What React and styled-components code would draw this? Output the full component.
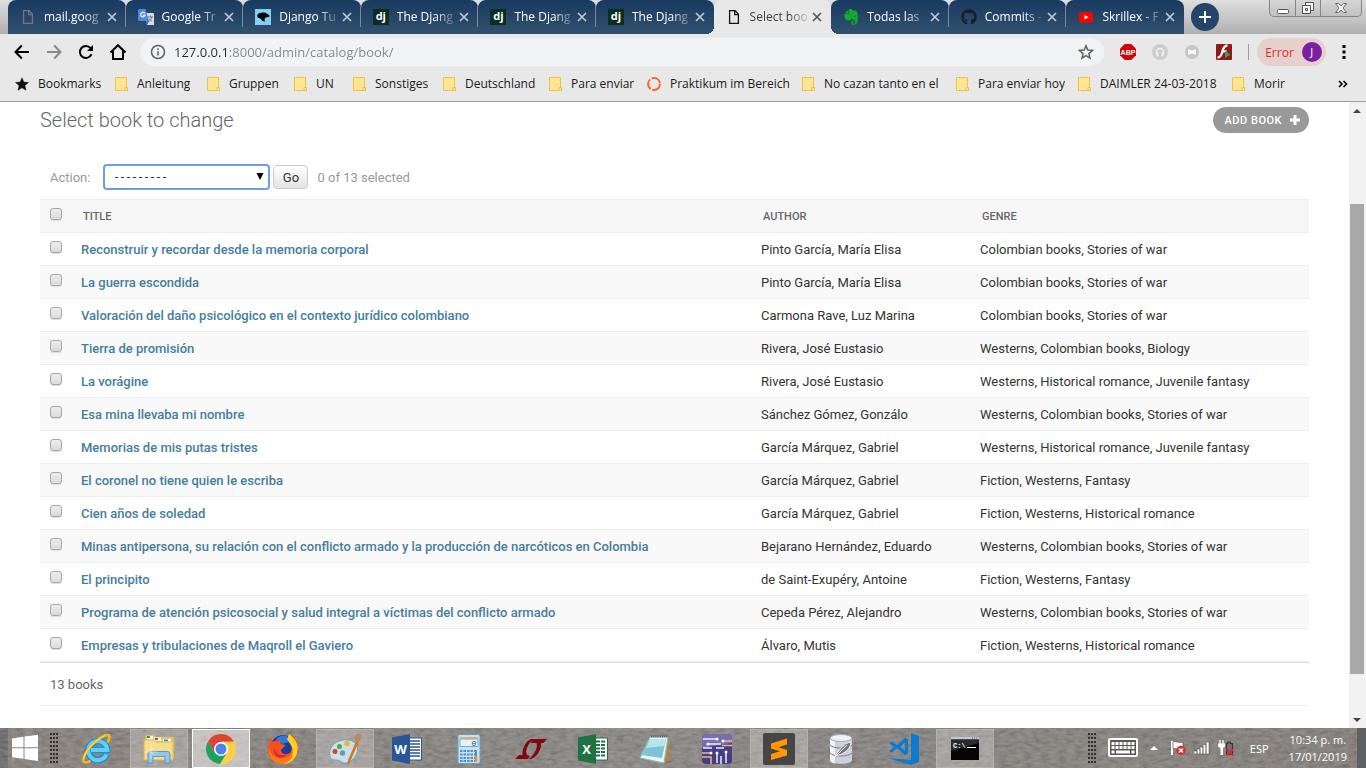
import React from 'react';
import styled, { createGlobalStyle, css } from 'styled-components';
import { SiEvernote } from 'react-icons/si';
import { FaGithub } from 'react-icons/fa';

const ui = '"Open Sans", "Noto Sans", sans-serif';
const roboto = 'Roboto, "Liberation Sans", sans-serif';

const GlobalStyle = createGlobalStyle`
  * { box-sizing: border-box; }
  body { margin: 0; background: #fff; font-family: ${ui}; }
  button, input, select { font: inherit; margin: 0; }
  a { text-decoration: none; }
`;

const Screen = styled.div`
  display: flex;
  flex-direction: column;
  min-height: 100vh;
`;

const PlainButton = styled.button`
  display: flex;
  align-items: center;
  justify-content: center;
  padding: 0;
  border: 0;
  background: none;
  color: inherit;
`;

/* ---------- tab strip ---------- */

const TabStrip = styled.div`
  display: flex;
  align-items: flex-start;
  height: 34px;
  padding: 0 4px 0 8px;
  background: linear-gradient(#dedede, #b0b0b0);
`;

const Tabs = styled.div`
  display: grid;
  grid-template-columns: repeat(10, minmax(0, 1fr));
  flex: 0 1 1176px;
  height: 34px;
`;

const activeTab = css`
  background: #e8e8e8;
  color: #3c3c3c;
  z-index: 1;
  &::before, &::after {
    content: '';
    position: absolute;
    bottom: 0;
    width: 8px;
    height: 8px;
  }
  &::before { left: -8px; background: radial-gradient(circle at 0 0, transparent 8px, #e8e8e8 8px); }
  &::after { right: -8px; background: radial-gradient(circle at 100% 0, transparent 8px, #e8e8e8 8px); }
`;

const Tab = styled.div`
  position: relative;
  display: flex;
  align-items: center;
  gap: 8px;
  padding: 0 8px 0 12px;
  border-radius: 8px 8px 0 0;
  background: linear-gradient(#183a60, #32516f);
  color: #fff;
  ${p => p.$divider && css`
    &::after {
      content: '';
      position: absolute;
      right: 0;
      top: 7px;
      width: 1px;
      height: 20px;
      background: #7189a1;
    }
  `}
  ${p => p.$active && activeTab}
`;

const TabTitle = styled(PlainButton)`
  flex: 1;
  min-width: 0;
  margin-right: -6px;
  justify-content: flex-start;
  overflow: hidden;
  white-space: nowrap;
  font-size: 12px;
  line-height: 18px;
  mask-image: linear-gradient(90deg, #000 65%, rgba(0, 0, 0, 0.1));
`;

const TabClose = styled(PlainButton)`
  width: 12px;
  height: 18px;
  color: ${p => (p.$active ? '#555' : '#c3ccd6')};
`;

const DjBadge = styled.span`
  display: block;
  flex: none;
  width: 16px;
  height: 16px;
  background: #0c2e20;
  color: #fff;
  font: 700 11px/14px ${ui};
  text-align: center;
`;

const NewTab = styled(PlainButton)`
  width: 28px;
  height: 28px;
  margin: 3px 0 0 7px;
  border-radius: 14px;
  background: #234569;
`;

const WindowControls = styled.div`
  display: flex;
  height: 17px;
  margin-left: auto;
  border: 1px solid #858585;
  border-top: 0;
  border-radius: 0 0 5px 5px;
  background: linear-gradient(#d6d6d6, #c0c0c0);
`;

const WindowButton = styled(PlainButton)`
  width: ${p => (p.$wide ? 41 : 25)}px;
  & + & { border-left: 1px solid #858585; }
`;

/* ---------- toolbar ---------- */

const Toolbar = styled.div`
  display: flex;
  align-items: center;
  height: 36px;
  padding: 0 12px;
  background: #e8e8e8;
`;

const IconRow = styled.div`
  display: flex;
  gap: 12px;
`;

const ToolButton = styled(PlainButton)`
  width: 20px;
  height: 28px;
`;

const Omnibox = styled.div`
  display: flex;
  align-items: center;
  flex: 1;
  height: 28px;
  margin: 0 14px 0 12px;
  padding: 0 10px;
  border-radius: 14px;
  background: #f1f3f4;
`;

const Address = styled.input`
  flex: 1;
  min-width: 0;
  margin-left: 8px;
  padding: 0;
  border: 0;
  outline: 0;
  background: linear-gradient(90deg, #2b2b2b 53px, #80868b 53px) text;
  color: #5f6368;
  -webkit-text-fill-color: transparent;
  font-size: 13px;
  line-height: 20px;
`;

const Divider = styled.span`
  width: 1px;
  height: 16px;
  margin: 0 8px 0 14px;
  background: #9c9c9c;
`;

const Profile = styled(PlainButton)`
  width: 69px;
  height: 28px;
  margin-right: 8px;
  gap: 8px;
  padding-left: 4px;
  border-radius: 14px;
  background: #e6cfcd;
  color: #d93025;
  font-size: 12px;
`;

const Avatar = styled.span`
  width: 20px;
  height: 20px;
  border-radius: 10px;
  background: #7b1fa2;
  color: #fff;
  font-size: 11px;
  line-height: 20px;
`;

/* ---------- bookmarks ---------- */

const BookmarksBar = styled.nav`
  display: flex;
  align-items: center;
  height: 32px;
  padding: 0 16px 3px 15px;
  border-bottom: 1px solid #a0a0a0;
  background: #e8e8e8;
`;

const Bookmark = styled.a`
  display: flex;
  align-items: center;
  flex: 0 1 ${p => p.$w}px;
  min-width: 0;
  color: #1a1a1a;
  font-size: 12px;
  line-height: 20px;
  svg { flex: none; width: 14px; margin-right: ${p => (p.$wide ? 9 : 8)}px; }
`;

const BookmarkText = styled.span`
  max-width: ${p => (p.$fade ? 112 : 124)}px;
  overflow: hidden;
  white-space: nowrap;
  ${p => p.$fade && css`mask-image: linear-gradient(90deg, #000 85%, rgba(0, 0, 0, 0.1));`}
`;

const More = styled(PlainButton)`
  margin-left: auto;
  width: 14px;
`;

/* ---------- page ---------- */

const Viewport = styled.div`
  display: flex;
  flex: 1;
`;

const Main = styled.main`
  flex: 1;
  min-width: 0;
  padding: 5px 40px 22px;
  color: #333;
  font-family: ${roboto};
  font-size: 13px;
`;

const PageHead = styled.header`
  display: flex;
  align-items: center;
  justify-content: space-between;
`;

const Heading = styled.h1`
  margin: 0;
  color: #666;
  font-size: 20px;
  font-weight: 300;
  line-height: 26px;
`;

const AddLink = styled.a`
  display: flex;
  align-items: center;
  gap: 7px;
  height: 26px;
  padding: 0 8px 0 12px;
  border-radius: 13px;
  background: #999;
  color: #fff;
  font-size: 11px;
  font-weight: 500;
  letter-spacing: 0.5px;
  text-transform: uppercase;
`;

const Actions = styled.form`
  display: flex;
  align-items: center;
  padding: 31px 10px 9px;
  color: #999;
`;

const ActionLabel = styled.label`
  display: flex;
  align-items: center;
`;

const SelectWrap = styled.span`
  position: relative;
  display: flex;
  margin: 0 3px 0 13px;
  svg { position: absolute; right: 6px; top: 9px; pointer-events: none; }
`;

const Select = styled.select`
  appearance: none;
  width: 167px;
  height: 26px;
  padding: 2px 8px 0;
  border: 2px solid #6f9be8;
  border-radius: 4px;
  background: #fff;
  color: #000;
  font: 10px/20px "Liberation Mono", monospace;
`;

const GoButton = styled.button`
  width: 35px;
  height: 24px;
  padding: 0;
  border: 1px solid #ccc;
  border-radius: 4px;
  background: linear-gradient(#fff, #e4e4e4);
  color: #333;
`;

const Counter = styled.span`
  margin-left: 9px;
`;

const Table = styled.table`
  width: 100%;
  table-layout: fixed;
  border-collapse: separate;
  border-spacing: 0;
  border-bottom: 1px solid #ddd;
`;

const Col = styled.col`
  width: ${p => (p.$w ? `${p.$w}px` : 'auto')};
`;

const HeadCell = styled.th`
  height: 34px;
  padding: 0 10px;
  border: 1px solid #eee;
  border-width: 1px 0;
  background: #f6f6f6;
  color: #666;
  font-size: 11px;
  font-weight: 500;
  text-align: left;
  text-transform: uppercase;
`;

const Row = styled.tr`
  background: #fff;
  &:nth-child(even) { background: #f9f9f9; }
`;

const Cell = styled.td`
  height: 33px;
  padding: 0 8px;
  border-bottom: 1px solid #eee;
  white-space: nowrap;
`;

const HeadCheckCell = styled(HeadCell)`
  padding: 0 10px 4px;
`;

const CheckCell = styled(Cell)`
  padding: 0 10px 4px;
`;

const Check = styled.input`
  appearance: none;
  display: block;
  width: 12px;
  height: 12px;
  border: 1px solid #a6a6a6;
  border-radius: 3px;
  background: linear-gradient(#ededed, #dcdcdc);
  box-shadow: 0 1px 1px #ddd;
`;

const BookLink = styled.a`
  color: #447e9b;
  font-weight: 500;
`;

const Paginator = styled.p`
  margin: 0;
  padding: 12px 10px 10px;
  border-bottom: 1px solid #eee;
  color: #666;
  line-height: 20px;
`;

const Scrollbar = styled.div`
  display: flex;
  flex-direction: column;
  width: 17px;
  padding: 0 2px 0 1px;
  background: #f1f1f1;
`;

const ScrollButton = styled(PlainButton)`
  height: 17px;
`;

const ScrollPart = styled.div`
  flex: ${p => p.$grow};
  background: ${p => (p.$thumb ? '#a8a8a8' : 'transparent')};
`;

/* ---------- taskbar ---------- */

const Taskbar = styled.footer`
  position: relative;
  display: flex;
  align-items: stretch;
  height: 40px;
  padding-left: 8px;
  background: linear-gradient(90deg, #5c5c5e 8px, #7b746e 8px, #7e7a76 50%, #77706a);
  color: #fff;
  font-size: 12px;
  & > * { position: relative; }
`;

const Texture = styled.svg`
  && { position: absolute; }
  inset: 0;
  width: 100%;
  height: 100%;
  opacity: 0.25;
`;

const Start = styled(PlainButton)`
  width: 34px;
`;

const Grip = styled.span`
  display: grid;
  place-items: center;
  width: 8px;
  margin: 0 10px 0 8px;
`;

const Apps = styled.div`
  display: flex;
  gap: 4px;
`;

const states = {
  idle: css`border-color: transparent;`,
  open: css`border-color: #b4b1ae; background: rgba(255, 255, 255, 0.24);`,
  active: css`border-color: #fff; background: rgba(255, 255, 255, 0.5);`,
};

const AppButton = styled(PlainButton)`
  width: 58px;
  height: 39px;
  margin-top: 1px;
  border: 1px solid;
  ${p => states[p.$state]}
`;

const Tray = styled.div`
  display: flex;
  align-items: center;
  margin-left: auto;
`;

const TrayIcons = styled.div`
  display: flex;
  align-items: center;
  gap: 8px;
  margin: 0 16px 0 2px;
`;

const TrayButton = styled(PlainButton)`
  width: ${p => p.$w || 16}px;
  height: 30px;
`;

const Clock = styled.time`
  margin: 0 10px 0 20px;
  font-size: 11px;
  line-height: 17px;
  text-align: center;
`;

const Language = styled.span`
  font-size: 11px;
`;

const ShowDesktop = styled.button`
  align-self: stretch;
  width: 9px;
  padding: 0;
  border: 0;
  background: #5f6062;
`;

/* ---------- drawings ---------- */

const PageIcon = ({ color }) => (
  <svg width="16" height="16" viewBox="0 0 16 16" fill="none" stroke={color} strokeWidth="1.3">
    <path d="M3.6 1.6h5.6l3.2 3.6v9.2H3.6zM8.7 1.8v3.8h3.6" />
  </svg>
);

const TranslateIcon = () => (
  <svg width="16" height="16" viewBox="0 0 16 16">
    <path d="M7 4h8.2l.8.8v11.2H9z" fill="#dadce0" />
    <path d="M10 8h5M12.5 6.5V8m1.5 0c-.6 2.4-2 3.6-3.5 4.3M11 9.500c.6 1.200 1.800 2.200 3 2.700" stroke="#6b7b87" fill="none" />
    <path d="M1 0h6.500l3.500 12H1.200L0 11V1z" fill="#4a86e8" />
    <path d="M8.500 12H11l-2 4z" fill="#2a56c6" />
    <path d="M6.800 4.300a2.300 2.300 0 1 0 .3 2.100H5" stroke="#fff" strokeWidth="1.200" fill="none" />
  </svg>
);

const TutorialIcon = () => (
  <svg width="16" height="16" viewBox="0 0 16 16">
    <path d="M0 0h16v16H0z" fill="#83d0f2" />
    <path d="M2 6.500q1-2.500 4-2.700 4-.8 6 1l2.500 1.700-.5 1.500-3.500.5-1 1.500.5 2.500-2.500-.5-2-2.500L3 8.800z" />
  </svg>
);

const YoutubeIcon = () => (
  <svg width="16" height="16" viewBox="0 0 16 16">
    <rect x="1" y="3" width="14" height="10.500" rx="2.500" fill="red" />
    <path d="M6.500 6v4.500l4-2.250z" fill="#fff" />
  </svg>
);

const CloseIcon = () => (
  <svg width="10" height="10" viewBox="0 0 10 10" stroke="currentColor" strokeWidth="1.600">
    <path d="M1 1l8 8M9 1L1 9" />
  </svg>
);

const BackIcon = ({ flip, color = '#000' }) => (
  <svg width="16" height="16" viewBox="0 0 16 16" fill="none" stroke={color} strokeWidth="2">
    <path d={flip ? 'M1 8h13M8.200 1.500L14.500 8l-6.300 6.500' : 'M15 8H2M7.800 1.500L1.500 8l6.300 6.500'} />
  </svg>
);

const ReloadIcon = () => (
  <svg width="16" height="16" viewBox="0 0 16 16">
    <path d="M13.500 10.200A6 6 0 1 1 12.600 4.200" fill="none" stroke="#000" strokeWidth="2" />
    <path d="M15 1v6H9z" />
  </svg>
);

const HomeIcon = () => (
  <svg width="18" height="18" viewBox="0 0 18 18" fill="none" stroke="#000" strokeWidth="2">
    <path d="M1.500 9.500L9 2.200l7.500 7.300M4 8v8h10V8" />
  </svg>
);

const InfoIcon = () => (
  <svg width="16" height="16" viewBox="0 0 16 16" fill="none" stroke="#5f6368" strokeWidth="1.500">
    <circle cx="8" cy="8" r="6.500" />
    <path d="M8 7.200v4.300M8 4.300v1.700" />
  </svg>
);

const StarIcon = ({ solid }) => (
  <svg width="16" height="16" viewBox={solid ? '1 1 14 14' : '0 0 16 16'} fill={solid ? '#111' : 'none'} stroke={solid ? '#111' : '#5f6368'} strokeWidth={solid ? 0.5 : 1.5}>
    <path d="M8 1.800l1.800 4.300 4.700.4-3.600 3.100 1.100 4.600L8 11.700l-4 2.500 1.100-4.600L1.500 6.500l4.700-.4z" />
  </svg>
);

const AbpIcon = () => (
  <svg width="16" height="16" viewBox="0 0 16 16">
    <path d="M4.700 0h6.600L16 4.700v6.600L11.300 16H4.700L0 11.300V4.700z" fill="#c70d2c" />
    <path d="M4.700 1h6.600L15 4.700v6.600L11.300 15H4.700L1 11.300V4.700z" fill="#d40000" />
    <text x="8" y="10.500" textAnchor="middle" fontFamily="Liberation Sans" fontWeight="700" fontSize="7" fill="#fff">ABP</text>
  </svg>
);

const HeadphonesIcon = () => (
  <svg width="16" height="16" viewBox="0 0 16 16">
    <circle cx="8" cy="8" r="8" fill="#cdcdcd" />
    <path d="M4.500 10V8a3.500 3.500 0 0 1 7 0v2" fill="none" stroke="#f4f4f4" strokeWidth="1.500" />
    <path d="M4.500 8.500h2v3.500h-2zM9.500 8.500h2v3.500h-2z" fill="#f4f4f4" />
  </svg>
);

const MaskIcon = () => (
  <svg width="16" height="16" viewBox="0 0 16 16">
    <circle cx="8" cy="8" r="7" fill="#c6c6c6" />
    <path d="M4 5l4 1.500L12 5v6l-4-1.500L4 11z" fill="#f6f6f6" />
  </svg>
);

const FlashIcon = () => (
  <svg width="16" height="16" viewBox="0 0 16 16">
    <rect width="16" height="16" rx="1" fill="#8e1a1a" />
    <path d="M11.500 1.500C7 1.500 7 6 5.800 9.500 5 12 4 13.500 1.500 13.500M6 7.300h4.500" fill="none" stroke="#fff" strokeWidth="2.300" />
    <path d="M9 7l5.500 3.500L9 14z" fill="#2fa84f" />
  </svg>
);

const FolderIcon = () => (
  <svg width="14" height="16" viewBox="0 0 14 16">
    <path d="M.5 1.500h11v9.500l1 .8v2.700H.5z" fill="#ffe58f" stroke="#e8c34e" />
    <path d="M10 14.500v-3h2.500v3z" fill="#ffe58f" stroke="#e8c34e" />
  </svg>
);

const RingIcon = () => (
  <svg width="14" height="16" viewBox="0 0 14 16">
    <circle cx="7" cy="8" r="6" fill="none" stroke="#f4692a" strokeWidth="1.800" strokeDasharray="11 1.500" />
  </svg>
);

const Triangle = ({ d, fill = '#444' }) => (
  <svg width="8" height="8" viewBox="0 0 8 8" fill={fill}><path d={d} /></svg>
);

const GripDots = () => (
  <svg width="8" height="32" viewBox="0 0 8 32">
    {[0, 1, 2].map(c => (
      <React.Fragment key={c}>
        <path d={`M${c * 3 + 1} 0v32`} stroke="#a19d98" strokeDasharray="1 3" strokeDashoffset="-2" />
        <path d={`M${c * 3 + 1} 1v31`} stroke="#33302e" strokeWidth="2" strokeDasharray="2 2" />
      </React.Fragment>
    ))}
  </svg>
);

const WindowsIcon = () => (
  <svg width="28" height="28" viewBox="0 0 28 28" fill="#fff">
    <path d="M1 4.500l11.500-1.800v10.600H1zM13.500 2.500L27 .7v12.600H13.500zM1 14.300h11.500v10.500L1 23.200zM13.500 14.300H27V27l-13.500-2z" />
  </svg>
);

const IeIcon = () => (
  <svg width="30" height="30" viewBox="0 0 30 30" fill="none">
    <path d="M24.500 20.500A9.500 9.500 0 1 1 25.300 16H9" stroke="#1d8fd0" strokeWidth="6.500" />
    <path d="M24.500 20.500A9.500 9.500 0 1 1 25.300 16H9" stroke="#62cdf8" strokeWidth="4" />
    <path d="M25.500 8.500C29 3 28-.8 22.500 1.800 14 5.500 3.500 16 1.500 24.500c-.8 4.500 2.500 5 7 2.300" stroke="#f4b81c" strokeWidth="2.600" />
    <path d="M22.500 1.800C14 5.500 3.500 16 1.500 24.500" stroke="#ffe070" strokeWidth="1" />
  </svg>
);

const ExplorerIcon = () => (
  <svg width="32" height="30" viewBox="0 0 32 30">
    <path d="M2 3q0-2 2-2h7l2 2h16q2 0 2 2v19H2z" fill="#e7c264" />
    <path d="M4 2h6v4H4zM11 3.500h7V7h-7zM20 5h8v3h-8z" fill="#fff" />
    <path d="M4 2h3v2H4z" fill="#3a9d3a" /><path d="M12 4h3v2h-3z" fill="#cf3b2c" /><path d="M21 5.500h4v2h-4z" fill="#3c8ad6" />
    <path d="M1 6h10l2 2h17v18H1z" fill="#f8dd8c" stroke="#dcb450" />
    <path d="M5 29V20q0-2.500 2.500-2.500h17q2.500 0 2.500 2.500v9h-5v-6.500H10V29z" fill="#8fc8e8" stroke="#4f9cc9" />
    <path d="M8 11v14M2 18h12M4 14l8 8" stroke="#fff" strokeWidth=".7" opacity=".7" />
  </svg>
);

const ChromeIcon = () => (
  <svg width="30" height="30" viewBox="0 0 30 30">
    <circle cx="15" cy="15" r="15" fill="#f9cf45" />
    <path d="M2 7.500A15 15 0 0 1 28.100 7.800H15L8.800 18.600z" fill="#dc4437" />
    <path d="M2 7.500A15 15 0 0 0 14.200 30l7-11.600-12.400.2z" fill="#1fa05d" />
    <path d="M15 7.800h13.100A15 15 0 0 1 14.200 30l7-11.600z" fill="#fdd04a" />
    <circle cx="15" cy="15" r="7" fill="#fff" />
    <circle cx="15" cy="15" r="5.500" fill="#4a84ed" />
  </svg>
);

const FirefoxIcon = () => (
  <svg width="32" height="32" viewBox="0 0 32 32">
    <circle cx="16" cy="14" r="12" fill="#163c9c" />
    <path d="M9 6q5-5 11-3l2 6-7 2z" fill="#3078dc" />
    <path d="M4 5l2 4c2-2 5-2 7-1l1 3 5 1-4 4c-2 2 0 5 4 5 5 0 7-4 5-10l-3-6 2-4c6 4 9 9 8 16C30 26 23 31 16 31 7 31 1 25 1 17 1 12 2 8 4 5z" fill="#f6501e" />
    <path d="M22 1c8 6 10 12 8 19-2 8-9 11-14 11 8-4 11-10 9-17l-5-8z" fill="#ffcf2a" />
    <path d="M2 15c2 8 8 12 16 10 5-1 7-5 7-9 3 9-4 15-11 15C6 30 1 24 2 15z" fill="#ff7a16" />
    <path d="M7 14c1 8 7 10 13 7-5 6-14 4-13-7z" fill="#d81c4b" />
  </svg>
);

const PaintIcon = () => (
  <svg width="34" height="32" viewBox="0 0 34 32">
    <path d="M15 7C6 8 0 16 2 23c1 6 7 3 10 5 4 3 8 3 13-2 6-6 6-14 1-17-3-2-7-2.500-11-2z" fill="#c9dfea" stroke="#7ba0b5" />
    <circle cx="14.500" cy="20" r="2.700" fill="#6899b3" />
    <circle cx="7" cy="18.500" r="2.500" fill="#d8432f" /><circle cx="11.500" cy="13.500" r="2.500" fill="#58a93b" /><circle cx="19" cy="10.500" r="2.700" fill="#efb22d" />
    <path d="M28 8l3 .5L21 31l-2-1z" fill="#d87524" />
    <path d="M25.500 4Q30-1 34 2l-2 6-4 1z" fill="#b98a5c" />
  </svg>
);

const OfficeIcon = ({ color, letter, grid }) => (
  <svg width="30" height="30" viewBox="0 0 30 30">
    <path d="M16 4h13.500v22H16z" fill="#fff" stroke={color} />
    <path
      d={grid ? 'M18 7.500h9M18 11h9M18 14.500h9M18 18h9M18 21.500h9' : 'M18 7h10M18 10h10M18 13h10M18 16h10M18 19h10M18 22h10'}
      stroke={color}
      strokeWidth={grid ? 2 : 1.3}
      strokeDasharray={grid ? '4 1' : undefined}
    />
    <path d="M0 3.500L18 0v30L0 26.500z" fill={color} />
    <text x="8.500" y="19.500" textAnchor="middle" fontFamily="Open Sans" fontWeight="700" fontSize="13" fill="#fff">{letter}</text>
  </svg>
);

const CalcIcon = () => (
  <svg width="24" height="30" viewBox="0 0 24 30">
    <rect x="1" y=".5" width="22" height="29" rx="1.500" fill="#c7e2f5" stroke="#5da0d2" />
    <path d="M3 3h18v1.500H3z" fill="#f7a943" />
    <path d="M3 5h18v7.500H3z" fill="#e8f1f6" stroke="#7aa7c6" />
    <text x="17" y="11.500" textAnchor="middle" fontFamily="Liberation Mono" fontSize="8" fill="#33465c">0</text>
    <path d="M3 17h15M3 20.500h15M3 24h15M3 27h15" stroke="#548fbd" strokeWidth="2" strokeDasharray="2.500 1" />
    <path d="M19 16v6" stroke="#548fbd" strokeWidth="2" /><path d="M19 22v6" stroke="#f28d1b" strokeWidth="2.500" />
  </svg>
);

const LinearIcon = () => (
  <svg width="32" height="20" viewBox="0 0 32 20" fill="#7e0a10">
    <path d="M0 20l4-4h3.500C7 9 11 2 16 0h2.500C13 4 9.500 13 12 16l3 1-2 3z" />
    <path d="M17 0h15l-3.500 4H26c1 7-5 14-9.500 16H14c6-5 9-12 7.500-16H16z" />
  </svg>
);

const NotepadIcon = () => (
  <svg width="32" height="30" viewBox="0 0 32 30">
    <path d="M27 4l3-2v24l-4 2z" fill="#b3873f" />
    <path d="M11 3h18l-4 26L1 24z" fill="#e7f4f7" stroke="#8fb6bf" />
    <path d="M11 5h16l-4 19L1.500 21z" fill="#7dc4d4" />
    <path d="M11 5h16l-1.500 7L7 14z" fill="#b8e2ea" />
    <path d="M12 2.500h17" stroke="#555" strokeWidth="2" strokeDasharray="1 1.200" />
  </svg>
);

const CircuitIcon = () => (
  <svg width="30" height="30" viewBox="0 0 30 30" fill="none">
    <rect width="30" height="30" rx="4" fill="#463d84" />
    <path d="M0 4q0-4 4-4h22q4 0 4 4v5L0 14z" fill="#776fae" />
    <path d="M1 5h14M6 10h13M1 14h9M14 14h8M15 19v10M19 22v8M24 17v12" stroke="#eceaf8" strokeWidth="1.500" />
    <path d="M22 7h8M20 11.500h10M0 19h9M0 23h9v7" stroke="#e9b983" strokeWidth="1.500" />
    <g fill="#fff"><circle cx="15" cy="5" r="1.500" /><circle cx="6" cy="10" r="1.500" /><circle cx="15" cy="19" r="1.500" /><circle cx="24" cy="18" r="1.500" /><circle cx="9" cy="19" r="1.500" /><circle cx="21" cy="7" r="1.500" /></g>
  </svg>
);

const SublimeIcon = () => (
  <svg width="32" height="32" viewBox="0 0 32 32">
    <rect width="32" height="32" rx="2" fill="#454545" />
    <path d="M8 10.500L24 5.500v6l-8.500 2.800L24 17v5.500L8 27v-6l9-2.800L8 15.500z" fill="#ff9800" />
  </svg>
);

const DatabaseIcon = () => (
  <svg width="24" height="30" viewBox="0 0 24 30">
    <path d="M1 4v22c0 5 22 5 22 0V4z" fill="#ccd0d8" />
    <path d="M1 4v22c0 2 2 3 5 3.500V7z" fill="#f0f2f5" />
    <ellipse cx="12" cy="4" rx="11" ry="3.500" fill="#edf0f4" stroke="#a6abb5" />
    <path d="M1 11c3 4 19 4 22 0M1 19c3 4 19 4 22 0" fill="none" stroke="#777e8a" />
    <path d="M3 26L12 14Q17 8 22 8q0 7-9 12l-7 2z" fill="#727983" stroke="#eee" />
    <path d="M3 26L18 11" stroke="#eee" />
  </svg>
);

const VsCodeIcon = () => (
  <svg width="32" height="32" viewBox="0 0 32 32" fill="#0b7ad1">
    <path d="M24 0l8 3v26l-8 3L0 25l24 2z" />
    <path fillRule="evenodd" d="M2 10l3-1.500 5 3.800L18 5l3 1.500v14L18 22l-8-7-5 4.500L2 18l5-4zM18 9.500l-5 4.200 5 4z" />
  </svg>
);

const ConsoleIcon = () => (
  <svg width="30" height="24" viewBox="0 0 30 24">
    <path d="M1 0h28v23H1z" fill="#050505" /><path d="M1 0h28v2.500H1z" fill="#b9c8da" />
    <path d="M22 1h6" stroke="#526a85" strokeDasharray="1 1" />
    <path d="M1 14L29 6V2.500H1z" fill="#333" opacity=".8" />
    <text x="3" y="11" fontFamily="Liberation Mono" fontWeight="700" fontSize="7" fill="#fff">C:\</text>
    <path d="M17 10.500h9" stroke="#fff" />
  </svg>
);

const KeyboardIcon = () => (
  <svg width="30" height="20" viewBox="0 0 30 20">
    <rect x="1" y="1" width="28" height="17" rx="1" fill="#5b5754" stroke="#fff" strokeWidth="2" />
    <path d="M3.500 5.500h23M3.500 9.500h23" stroke="#fff" strokeWidth="3" strokeDasharray="3 1" />
    <path d="M3.500 14h3M8 14h14M23.500 14h3" stroke="#fff" strokeWidth="3" />
  </svg>
);

const FlagIcon = () => (
  <svg width="16" height="16" viewBox="0 0 16 16">
    <path d="M2 1v14" stroke="#fff" strokeWidth="2" />
    <path d="M3 2c3-1.500 5 1.500 10 0v7c-5 1.500-7-1.500-10 0z" fill="#fff" stroke="#3e3a37" strokeWidth=".6" />
    <circle cx="11" cy="10.500" r="4.700" fill="#d92f2b" />
    <path d="M9 8.500l4 4M13 8.500l-4 4" stroke="#fff" strokeWidth="1.500" />
  </svg>
);

const SignalIcon = () => (
  <svg width="16" height="16" viewBox="0 0 16 16" fill="#fff" stroke="#3e3a37" strokeWidth=".5">
    <path d="M0 11h3v3H0zM3 9h3v5H3zM6 7h3v7H6zM9 4.500h3V14H9zM12 2h3v12h-3z" />
  </svg>
);

const PowerIcon = () => (
  <svg width="16" height="16" viewBox="0 0 16 16">
    <path d="M2 0v4M5 0v4" stroke="#fff" strokeWidth="1.300" />
    <path d="M0 3.500h7v3L5 8v7H2.500V8L0 6.500z" fill="#fff" />
    <path d="M8.500 3.500h1.300V2h2.500v1.500h2.200v11h-6z" fill="#766f69" stroke="#383532" strokeWidth="1.200" />
    <path d="M8.500 9.500l6.500 6M15 9.500l-6.500 6" stroke="#d82b2b" strokeWidth="1.800" />
  </svg>
);

/* ---------- data ---------- */

const dj = <DjBadge aria-hidden="true">dj</DjBadge>;

const tabs = [
  { title: 'mail.goog', icon: <PageIcon color="#777" />, divider: true },
  { title: 'Google Tr', icon: <TranslateIcon />, divider: true },
  { title: 'Django Tu', icon: <TutorialIcon />, divider: true },
  { title: 'The Djang', icon: dj, divider: true },
  { title: 'The Djang', icon: dj, divider: true },
  { title: 'The Djang', icon: dj },
  { title: 'Select boo', icon: <PageIcon color="#111" />, active: true },
  { title: 'Todas las', icon: <SiEvernote size={16} color="#14a82f" />, divider: true },
  { title: 'Commits -', icon: <FaGithub size={16} color="#1b1f23" />, divider: true },
  { title: 'Skrillex - F', icon: <YoutubeIcon /> },
];

const bookmarks = [
  { text: 'Bookmarks', w: 100, icon: <StarIcon solid />, wide: true },
  { text: 'Anleitung', w: 92 },
  { text: 'Gruppen', w: 87 },
  { text: 'UN', w: 59 },
  { text: 'Sonstiges', w: 90 },
  { text: 'Deutschland', w: 106 },
  { text: 'Para enviar', w: 98 },
  { text: 'Praktikum im Bereich', w: 155, icon: <RingIcon />, wide: true },
  { text: 'No cazan tanto en el', w: 154 },
  { text: 'Para enviar hoy', w: 122 },
  { text: 'DAIMLER 24-03-2018', w: 154 },
  { text: 'Morir', w: 80 },
];

const books = [
  ['Reconstruir y recordar desde la memoria corporal', 'Pinto García, María Elisa', 'Colombian books, Stories of war'],
  ['La guerra escondida', 'Pinto García, María Elisa', 'Colombian books, Stories of war'],
  ['Valoración del daño psicológico en el contexto jurídico colombiano', 'Carmona Rave, Luz Marina', 'Colombian books, Stories of war'],
  ['Tierra de promisión', 'Rivera, José Eustasio', 'Westerns, Colombian books, Biology'],
  ['La vorágine', 'Rivera, José Eustasio', 'Westerns, Historical romance, Juvenile fantasy'],
  ['Esa mina llevaba mi nombre', 'Sánchez Gómez, Gonzálo', 'Westerns, Colombian books, Stories of war'],
  ['Memorias de mis putas tristes', 'García Márquez, Gabriel', 'Westerns, Historical romance, Juvenile fantasy'],
  ['El coronel no tiene quien le escriba', 'García Márquez, Gabriel', 'Fiction, Westerns, Fantasy'],
  ['Cien años de soledad', 'García Márquez, Gabriel', 'Fiction, Westerns, Historical romance'],
  ['Minas antipersona, su relación con el conflicto armado y la producción de narcóticos en Colombia', 'Bejarano Hernández, Eduardo', 'Westerns, Colombian books, Stories of war'],
  ['El principito', 'de Saint-Exupéry, Antoine', 'Fiction, Westerns, Fantasy'],
  ['Programa de atención psicosocial y salud integral a víctimas del conflicto armado', 'Cepeda Pérez, Alejandro', 'Westerns, Colombian books, Stories of war'],
  ['Empresas y tribulaciones de Maqroll el Gaviero', 'Álvaro, Mutis', 'Fiction, Westerns, Historical romance'],
];

const apps = [
  ['Internet Explorer', <IeIcon />, 'idle'],
  ['File Explorer', <ExplorerIcon />, 'open'],
  ['Chrome', <ChromeIcon />, 'active'],
  ['Firefox', <FirefoxIcon />, 'idle'],
  ['Paint', <PaintIcon />, 'open'],
  ['Word', <OfficeIcon color="#2a5699" letter="W" />, 'idle'],
  ['Calculator', <CalcIcon />, 'idle'],
  ['LTspice', <LinearIcon />, 'idle'],
  ['Excel', <OfficeIcon color="#1f7244" letter="X" grid />, 'idle'],
  ['Notepad', <NotepadIcon />, 'idle'],
  ['Circuit designer', <CircuitIcon />, 'idle'],
  ['Sublime Text', <SublimeIcon />, 'open'],
  ['Database browser', <DatabaseIcon />, 'idle'],
  ['Visual Studio Code', <VsCodeIcon />, 'idle'],
  ['Command prompt', <ConsoleIcon />, 'open'],
];

export default function App() {
  return (
    <Screen>
      <GlobalStyle />
      <TabStrip>
        <Tabs>
          {tabs.map((t, i) => (
            <Tab key={i} $active={t.active} $divider={t.divider}>
              {t.icon}
              <TabTitle>{t.title}</TabTitle>
              <TabClose $active={t.active} aria-label="Close tab"><CloseIcon /></TabClose>
            </Tab>
          ))}
        </Tabs>
        <NewTab aria-label="New tab">
          <svg width="12" height="12" stroke="#fff" strokeWidth="2"><path d="M6 0v12M0 6h12" /></svg>
        </NewTab>
        <WindowControls>
          <WindowButton aria-label="Minimize">
            <svg width="12" height="12"><rect x=".5" y="7.500" width="11" height="4" rx="1" fill="#fff" stroke="#555" /></svg>
          </WindowButton>
          <WindowButton aria-label="Restore">
            <svg width="14" height="14" fill="#f4f4f4" stroke="#555"><path d="M4.500 1.500h8v8h-8z" /><path d="M1.500 4.500h8v8h-8z" /><path d="M4.500 7.500h2v2h-2z" /></svg>
          </WindowButton>
          <WindowButton $wide aria-label="Close window">
            <svg width="14" height="12" fill="#f4f4f4" stroke="#666"><path d="M1.500 1.500h3L7 4l2.500-2.500h3L9 6l3.500 4.500h-3L7 8l-2.500 2.500h-3L5 6z" /></svg>
          </WindowButton>
        </WindowControls>
      </TabStrip>

      <Toolbar>
        <IconRow>
          <ToolButton aria-label="Back"><BackIcon /></ToolButton>
          <ToolButton aria-label="Forward"><BackIcon flip color="#8a8a8a" /></ToolButton>
          <ToolButton aria-label="Reload"><ReloadIcon /></ToolButton>
          <ToolButton aria-label="Home"><HomeIcon /></ToolButton>
        </IconRow>
        <Omnibox>
          <InfoIcon />
          <Address aria-label="Address" defaultValue="127.0.0.1:8000/admin/catalog/book/" />
          <PlainButton aria-label="Bookmark this page"><StarIcon /></PlainButton>
        </Omnibox>
        <IconRow>
          <ToolButton aria-label="Adblock Plus"><AbpIcon /></ToolButton>
          <ToolButton aria-label="Headphones"><HeadphonesIcon /></ToolButton>
          <ToolButton aria-label="Mask"><MaskIcon /></ToolButton>
          <ToolButton aria-label="Flash"><FlashIcon /></ToolButton>
        </IconRow>
        <Divider />
        <Profile>Error<Avatar>J</Avatar></Profile>
        <ToolButton aria-label="Menu">
          <svg width="4" height="14"><path d="M.5 0h3v3h-3zM.5 5.500h3v3h-3zM.5 11h3v3h-3z" /></svg>
        </ToolButton>
      </Toolbar>

      <BookmarksBar aria-label="Bookmarks">
        {bookmarks.map(b => (
          <Bookmark key={b.text} href="#" $w={b.w} $wide={b.wide}>
            {b.icon || <FolderIcon />}
            <BookmarkText>{b.text}</BookmarkText>
          </Bookmark>
        ))}
        <More aria-label="More bookmarks">
          <svg width="10" height="8" fill="none" stroke="#000" strokeWidth="1.600"><path d="M1 1l3 3-3 3M5.500 1l3 3-3 3" /></svg>
        </More>
      </BookmarksBar>

      <Viewport>
        <Main>
          <PageHead>
            <Heading>Select book to change</Heading>
            <AddLink href="#">
              Add book
              <svg width="12" height="12" stroke="#fff" strokeWidth="3"><path d="M6 1v10M1 6h10" /></svg>
            </AddLink>
          </PageHead>
          <Actions onSubmit={e => e.preventDefault()}>
            <ActionLabel>
              Action:
              <SelectWrap>
                <Select><option>---------</option></Select>
                <Triangle d="M.5 0h7L4 7z" fill="#000" />
              </SelectWrap>
            </ActionLabel>
            <GoButton>Go</GoButton>
            <Counter>0 of 13 selected</Counter>
          </Actions>
          <Table>
            <colgroup><Col $w={33} /><Col /><Col $w={219} /><Col $w={337} /></colgroup>
            <thead>
              <tr>
                <HeadCheckCell><Check type="checkbox" aria-label="Select all books" /></HeadCheckCell>
                <HeadCell>Title</HeadCell>
                <HeadCell>Author</HeadCell>
                <HeadCell>Genre</HeadCell>
              </tr>
            </thead>
            <tbody>
              {books.map(([title, author, genre]) => (
                <Row key={title}>
                  <CheckCell><Check type="checkbox" aria-label={`Select ${title}`} /></CheckCell>
                  <Cell><BookLink href="#">{title}</BookLink></Cell>
                  <Cell>{author}</Cell>
                  <Cell>{genre}</Cell>
                </Row>
              ))}
            </tbody>
          </Table>
          <Paginator>13 books</Paginator>
        </Main>
        <Scrollbar>
          <ScrollButton aria-label="Scroll up"><Triangle d="M0 6l4-4 4 4z" /></ScrollButton>
          <ScrollPart $grow={85} />
          <ScrollPart $grow={470} $thumb />
          <ScrollPart $grow={37} />
          <ScrollButton aria-label="Scroll down"><Triangle d="M0 2l4 4 4-4z" /></ScrollButton>
        </Scrollbar>
      </Viewport>

      <Taskbar>
        <Texture aria-hidden="true">
          <filter id="grain">
            <feTurbulence type="fractalNoise" baseFrequency="0.12 0.3" numOctaves="3" seed="4" />
            <feColorMatrix type="matrix" values="1 0 0 0 0  1 0 0 0 0  1 0 0 0 0  0 0 0 0 1" />
          </filter>
          <rect width="100%" height="100%" filter="url(#grain)" />
        </Texture>
        <Start aria-label="Start"><WindowsIcon /></Start>
        <Grip><GripDots /></Grip>
        <Apps>
          {apps.map(([name, icon, state]) => (
            <AppButton key={name} aria-label={name} $state={state}>{icon}</AppButton>
          ))}
        </Apps>
        <Tray>
          <Grip><GripDots /></Grip>
          <TrayIcons>
            <TrayButton $w={30} aria-label="Touch keyboard"><KeyboardIcon /></TrayButton>
            <TrayButton aria-label="Show hidden icons"><Triangle d="M0 6l4-4 4 4z" fill="#fff" /></TrayButton>
            <TrayButton aria-label="Action center"><FlagIcon /></TrayButton>
            <TrayButton aria-label="Network"><SignalIcon /></TrayButton>
            <TrayButton aria-label="Power"><PowerIcon /></TrayButton>
          </TrayIcons>
          <Language>ESP</Language>
          <Clock>10:34 p. m.<br />17/01/2019</Clock>
          <ShowDesktop aria-label="Show desktop" />
        </Tray>
      </Taskbar>
    </Screen>
  );
}
